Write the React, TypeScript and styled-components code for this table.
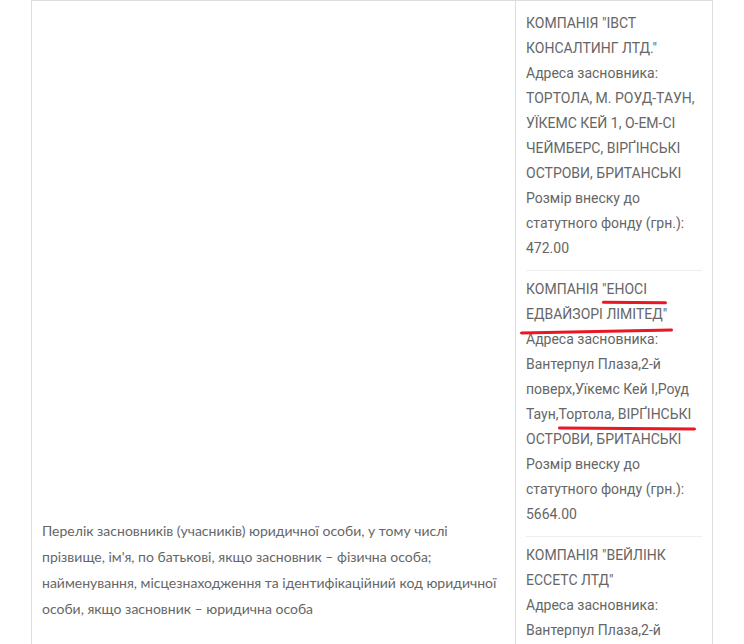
//react
import React from "react";

//styled-components
import styled, { createGlobalStyle } from "styled-components";

const GlobalStyle = createGlobalStyle`
  html, body {
    margin: 0;
    padding: 0;
    background: #ffffff;
  }
`;

const Page = styled.div`
  padding: 0 31px;
`;

const Table = styled.table`
  width: 100%;
  table-layout: fixed;
  border-collapse: collapse;

  font-family: Roboto, "Noto Sans", sans-serif;
  font-size: 14px;
  color: #666666;
`;

const Cell = styled.td<{ $width?: number; $lineHeight: number; $font?: string }>`
  width: ${(props) => (props.$width ? `${props.$width}px` : "auto")};
  padding: 10px;
  vertical-align: middle;
  border: 1px solid #dddddd;
  line-height: ${(props) => props.$lineHeight}px;
  font-family: ${(props) => props.$font ?? "inherit"};
`;

const Company = styled.div`
  padding-bottom: 9px;
  border-bottom: 1px solid #eeeeee;

  & + & {
    padding-top: 6px;
  }

  &:last-child {
    margin-bottom: 9px;
  }
`;

//hand-drawn red underline over the text
const Mark = styled.span<{ $left: number; $right: number; $drop: number; $tilt: number }>`
  position: relative;

  &::after {
    content: "";
    position: absolute;
    left: ${(props) => props.$left}px;
    right: ${(props) => props.$right}px;
    bottom: ${(props) => -props.$drop}px;
    height: 3px;
    border-radius: 2px;
    background-color: #ea1622;
    transform: rotate(${(props) => props.$tilt}deg);
  }
`;

interface Founder {
  name: React.ReactNode;
  address: React.ReactNode;
  amount: string;
}

const founders: Founder[] = [
  {
    name: 'КОМПАНІЯ "ІВСТ КОНСАЛТИНГ ЛТД."',
    address: "ТОРТОЛА, М. РОУД-ТАУН, УЇКЕМС КЕЙ 1, О-ЕМ-СІ ЧЕЙМБЕРС, ВІРҐІНСЬКІ ОСТРОВИ, БРИТАНСЬКІ",
    amount: "472.00",
  },
  {
    name: (
      <>
        КОМПАНІЯ{" "}
        <Mark $left={0} $right={-20} $drop={7} $tilt={0.6}>
          "ЕНОСІ
        </Mark>{" "}
        <Mark $left={-6} $right={-6} $drop={11} $tilt={-1.1}>
          ЕДВАЙЗОРІ ЛІМІТЕД"
        </Mark>
      </>
    ),
    address: (
      <>
        Вантерпул Плаза,2-й поверх,Уїкемс Кей І,Роуд Таун,
        <Mark $left={-1} $right={-4} $drop={8} $tilt={0.5}>
          Тортола, ВІРҐІНСЬКІ
        </Mark>{" "}
        ОСТРОВИ, БРИТАНСЬКІ
      </>
    ),
    amount: "5664.00",
  },
  {
    name: 'КОМПАНІЯ "ВЕЙЛІНК ЕССЕТС ЛТД"',
    address: "Вантерпул Плаза,2-й поверх,Уїкемс Кей І,Роуд Таун,Тортола, ВІРҐІНСЬКІ ОСТРОВИ, БРИТАНСЬКІ",
    amount: "4720.00",
  },
  {
    name: 'КОМПАНІЯ "ЛАЙТХАУС ТРАСТІ ЛІМІТЕД"',
    address:
      "Вантерпул Плаза,2-й поверх,Уїкемс Кей І,Роуд Таун,Тортола, ВІРҐІНСЬКІ ОСТРОВИ, БРИТАНСЬКІ, ОФІС 12, БЛОК А, ПОВЕРХ 3",
    amount: "1180.00",
  },
];

export default function App() {
  return (
    <Page>
      <GlobalStyle />
      <Table>
        <tbody>
          <tr>
            <Cell $lineHeight={26} $font="Lato, Roboto, sans-serif">
              Перелік засновників (учасників) юридичної особи, у тому числі прізвище, ім'я, по батькові, якщо
              засновник – фізична особа; найменування, місцезнаходження та ідентифікаційний код юридичної
              особи, якщо засновник – юридична особа
            </Cell>
            <Cell $width={176} $lineHeight={25}>
              {founders.map((founder, index) => (
                <Company key={index}>
                  {founder.name}
                  <br />
                  Адреса засновника: {founder.address}
                  <br />
                  Розмір внеску до статутного фонду (грн.): {founder.amount}
                </Company>
              ))}
            </Cell>
          </tr>
        </tbody>
      </Table>
    </Page>
  );
}
